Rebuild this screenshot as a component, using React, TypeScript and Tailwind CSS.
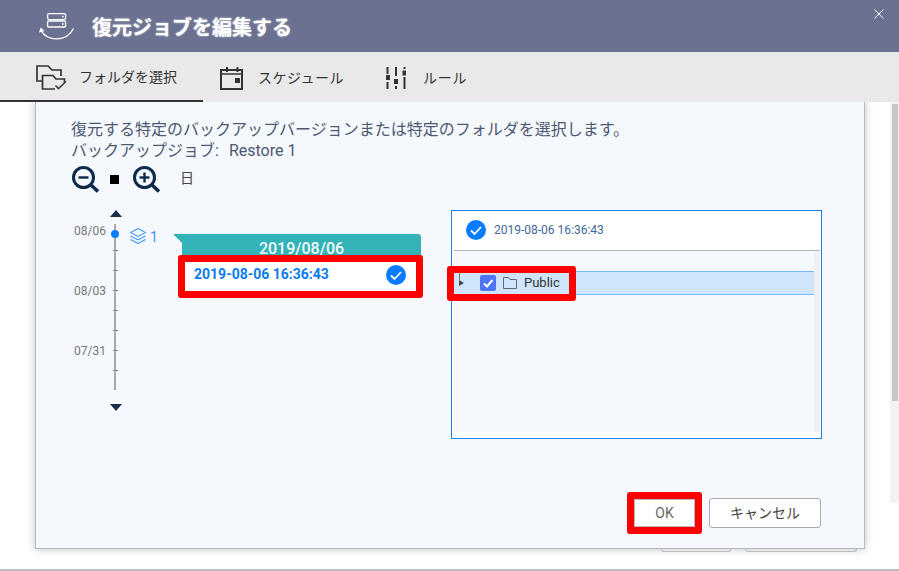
import React from "react";

function CheckCircle() {
  return (
    <svg width="20" height="20" viewBox="0 0 20 20" className="block shrink-0">
      <circle cx="10" cy="10" r="10" fill="#0a7cff" />
      <path d="M5 10.5 L8.5 14 L15 7" fill="none" stroke="#fff" strokeWidth="1.8" />
    </svg>
  );
}

function HeaderIcon() {
  return (
    <svg width="38" height="30" viewBox="38 13 38 30" className="block shrink-0">
      <g fill="none" stroke="#fff" strokeWidth="1.3">
        <rect x="47.6" y="15.6" width="18" height="6" rx="1.5" />
        <rect x="47.6" y="23" width="18" height="6" rx="1" />
        <path d="M41 32 C46 44 67 44 73.5 30.5" />
      </g>
      <path d="M39 34.5 L40.6 29.4 L44.6 33 Z" fill="#fff" />
      <rect x="62" y="17.8" width="1.6" height="1.6" fill="#fff" />
      <rect x="62" y="25.2" width="1.6" height="1.6" fill="#fff" />
    </svg>
  );
}

function FolderCheckIcon() {
  return (
    <svg width="31" height="26" viewBox="36 65 31 26" className="block shrink-0">
      <g fill="none" stroke="#333" strokeWidth="1.7">
        <path d="M42 81 H37 V66 H48 L52 70 H61 V76" />
        <path d="M55 89 H42.5 V75.5 H53 L56 79 H64.5 V83" />
        <path d="M55.5 85.5 L58.5 88.5 L66 81.5" stroke="#444" />
      </g>
    </svg>
  );
}

function CalendarIcon() {
  return (
    <svg width="23" height="23" viewBox="220 67 23 23" className="block shrink-0">
      <g fill="none" stroke="#333" strokeWidth="2">
        <rect x="221" y="70" width="21" height="19" />
        <path d="M221 74 H242" strokeWidth="1.5" />
        <path d="M227 67 V72 M237.5 67 V72" />
      </g>
      <rect x="235" y="78" width="5" height="5" fill="#333" />
    </svg>
  );
}

function SlidersIcon() {
  return (
    <svg width="20" height="23" viewBox="387 67 20 23" className="block shrink-0">
      <g fill="none" stroke="#333" strokeWidth="2">
        <path d="M388.5 67 V74 M388.5 82 V89" />
        <path d="M397 67 V76 M397 86 V89" />
        <path d="M405.5 67 V69 M405.5 77 V89" />
      </g>
      <rect x="387" y="75" width="4" height="5" fill="#333" />
      <rect x="395" y="79" width="4" height="5" fill="#333" />
      <rect x="403.5" y="70.5" width="4" height="5" fill="#333" />
    </svg>
  );
}

function Magnifier({ plus }: { plus?: boolean }) {
  return (
    <svg width="28" height="27" viewBox="0 0 28 27" className="block shrink-0">
      <g fill="none" stroke="#0d2a4a">
        <circle cx="11.5" cy="11.5" r="10" strokeWidth="3" />
        <path d="M18.5 18.5 L26 25.5" strokeWidth="3.6" />
        <path d="M6.5 11.5 H16.5" strokeWidth="2.4" />
        {plus && <path d="M11.5 6.5 V16.5" strokeWidth="2.4" />}
      </g>
    </svg>
  );
}

function LayersIcon() {
  return (
    <svg width="16" height="16" viewBox="130 227 16 16" className="block shrink-0">
      <g fill="none" stroke="#3d96ff" strokeWidth="1.1">
        <path d="M138 227.5 L145.5 231.5 L138 235.5 L130.5 231.5 Z" />
        <path d="M130.5 235 L138 239 L145.5 235" />
        <path d="M130.5 238.5 L138 242.5 L145.5 238.5" />
      </g>
    </svg>
  );
}

export default function App() {
  return (
    <div className="flex h-[571px] w-[899px] flex-col overflow-hidden bg-white font-[Roboto,'Noto_Sans_CJK_JP',sans-serif]">
      <header className="relative z-10 flex h-[52px] shrink-0 items-center bg-[#6b7190] pl-[38px] pr-[15px]">
        <HeaderIcon />
        <h1 className="mt-[4px] ml-4 text-[20px] leading-[28px] font-bold text-white [text-shadow:0_0_2px_rgba(255,255,255,0.8)]">
          復元ジョブを編集する
        </h1>
        <svg width="10" height="10" viewBox="0 0 10 10" className="mb-[24px] ml-auto block">
          <path d="M0.5 0.5 L9.5 9.5 M9.5 0.5 L0.5 9.5" stroke="#fff" strokeWidth="1" fill="none" />
        </svg>
      </header>

      <nav className="relative z-10 flex h-[50px] shrink-0 items-center bg-[#e9e9e9] text-[14px] text-[#333]">
        <div className="flex h-full w-[203px] items-center gap-[12px] border-b-2 border-[#333] pt-[3px] pl-[36px]">
          <FolderCheckIcon />
          <span>フォルダを選択</span>
        </div>
        <div className="ml-[17px] flex items-center gap-[15px] pt-[3px]">
          <CalendarIcon />
          <span className="w-[84px] tracking-[0.5px] whitespace-nowrap">スケジュール</span>
        </div>
        <div className="ml-[44px] flex items-center gap-[17px] pt-[3px]">
          <SlidersIcon />
          <span className="tracking-[0.7px] whitespace-nowrap">ルール</span>
        </div>
      </nav>

      <main className="flex h-[467px] shrink-0 items-start">
        <div className="ml-[35px] w-[830px] shrink-0">
          <section className="flex h-[447px] flex-col border-x border-b border-[#b5b9c6] bg-[#f5f8fd] pl-[35px] shadow-[0_0_8px_rgba(0,0,0,0.25)]">
            <p className="pt-[17px] text-[16px] leading-[21px] text-[#4d5872]">
              復元する特定のバックアップバージョンまたは特定のフォルダを選択します。
              <br />
              バックアップジョブ:<span className="ml-[10px]">Restore 1</span>
            </p>

            <div className="mt-[5px] flex h-[27px] items-center">
              <div className="ml-px">
                <Magnifier />
              </div>
              <div className="ml-[10px] h-[9px] w-[9px] bg-black" />
              <div className="ml-[14px]">
                <Magnifier plus />
              </div>
              <span className="mb-[3px] ml-[19px] text-[14px] leading-[20px] text-[#444]">日</span>
            </div>

            <div className="mt-[12px] flex items-start">
              <div className="flex w-[102px] shrink-0 items-start">
                <div className="w-[35px] shrink-0 pt-[17px] text-right text-[12px] leading-[18px] text-[#777]">
                  <div className="h-[60px]">08/06</div>
                  <div className="h-[60px]">08/03</div>
                  <div className="h-[60px]">07/31</div>
                </div>
                <div className="ml-[3px] flex w-[12px] shrink-0 flex-col items-center">
                  <div className="mt-[5px] ml-[2px] h-0 w-0 border-x-[6px] border-b-[7px] border-x-transparent border-b-[#1e2c4d]" />
                  <div className="relative mt-[7px] flex h-[166px] w-[2px] flex-col items-center gap-[19px] bg-[#a8a8a8] pt-[26px]">
                    <span className="absolute top-[6px] left-[-3px] h-[8px] w-[8px] rounded-full bg-[#0a7cff]" />
                    {[0, 1, 2, 3, 4, 5, 6].map((i) => (
                      <span key={i} className="h-px w-[5px] shrink-0 bg-[#888]" />
                    ))}
                  </div>
                  <div className="mt-[14px] ml-[2px] h-0 w-0 border-x-[6px] border-t-[7px] border-x-transparent border-t-[#1e2c4d]" />
                </div>
                <div className="mt-[22px] ml-[9px] flex items-center gap-[4px] text-[14px] leading-[16px] text-[#3d96ff]">
                  <LayersIcon />
                  <span className="pt-[2px]">1</span>
                </div>
              </div>

              <div className="w-[250px] shrink-0 pt-[29px]">
                <div className="relative ml-[9px] h-[21px] w-[239px] rounded-tr-[3px] bg-[#33b3b8] text-center text-[16px] leading-[30px] font-medium text-[#f2fbfb]">
                  <span className="absolute top-0 left-[-9px] h-0 w-0 border-t-[9px] border-l-[9px] border-t-[#33b3b8] border-l-transparent" />
                  2019/08/06
                </div>
                <div className="relative ml-[5px] flex h-[43px] w-[245px] items-start rounded-[3px] border-[7px] border-[#ff0000] bg-white pt-[3px] pr-[10px] pl-[9px]">
                  <span className="text-[14px] leading-[18px] font-bold text-[#0a7cf0]">2019-08-06 16:36:43</span>
                  <span className="ml-auto">
                    <CheckCircle />
                  </span>
                </div>
              </div>

              <div className="relative mt-[5px] ml-[28px] h-[229px] w-[371px] shrink-0 border border-[#1a7fe8] bg-white">
                <div className="mr-px ml-[2px] flex h-[40px] items-center gap-[8px] border-b border-[#b4b4b4] pb-px pl-[12px]">
                  <CheckCircle />
                  <span className="text-[12px] text-[#3d6a9c]">2019-08-06 16:36:43</span>
                </div>
                <div className="mr-px ml-[2px] flex h-[181px] bg-[#f5f8fd]">
                  <div className="flex-1 pt-[20px]">
                    <div className="flex h-[24px] items-center border-y border-[#7ab8f5] bg-[#cfe5fb] pl-[5px]">
                      <span className="relative h-0 w-0 border-y-[3.5px] border-l-[5px] border-y-transparent border-l-[#444]">
                        <span className="absolute top-[-10px] left-[-5px] h-[8px] w-px bg-[#777]" />
                      </span>
                      <span className="ml-[16px] flex h-[16px] w-[16px] items-center justify-center rounded-[2px] bg-[#4f75f5]">
                        <svg width="12" height="12" viewBox="0 0 12 12" className="block">
                          <path d="M2 6.5 L5 9.5 L10.5 3" fill="none" stroke="#fff" strokeWidth="2" />
                        </svg>
                      </span>
                      <svg width="14" height="12" viewBox="0 0 14 12" className="ml-[7px] block">
                        <path d="M0.5 11.5 V0.5 H5.5 L7 2.5 H13.5 V11.5 Z" fill="none" stroke="#666" strokeWidth="1" />
                      </svg>
                      <span className="ml-[7px] text-[13px] leading-[16px] text-[#333]">Public</span>
                    </div>
                  </div>
                  <div className="w-[6px] bg-[#f0f0f0]" />
                </div>
                <div className="absolute top-[55px] left-[-5px] h-[35px] w-[129px] rounded-[3px] border-[7px] border-[#ff0000]" />
              </div>
            </div>

            <div className="mt-auto flex items-center justify-end pr-[43px] pb-[14px]">
              <div className="rounded-[3px] border-[7px] border-[#ff0000]">
                <button className="block h-[28px] w-[61px] border border-[#bbb] bg-white text-[14px] text-[#666]">OK</button>
              </div>
              <button className="ml-[7px] h-[30px] w-[112px] rounded-[3px] border border-[#aaa] bg-white text-[14px] text-[#444]">
                キャンセル
              </button>
            </div>
          </section>
          <div className="flex pl-[626px]">
            <div className="h-[3px] w-[70px] rounded-b-[3px] border-x border-b border-[#bbb]" />
            <div className="ml-[14px] h-[3px] w-[112px] rounded-b-[3px] border-x border-b border-[#bbb]" />
          </div>
        </div>

        <div className="ml-[25px] h-[401px] w-[9px] shrink-0 bg-[#f3f3f3] pt-[2px] pl-[2px]">
          <div className="h-[297px] w-[6px] bg-[#c8c8c8]" />
        </div>
      </main>

      <div className="h-[2px] shrink-0 bg-[#bbb]" />
    </div>
  );
}
